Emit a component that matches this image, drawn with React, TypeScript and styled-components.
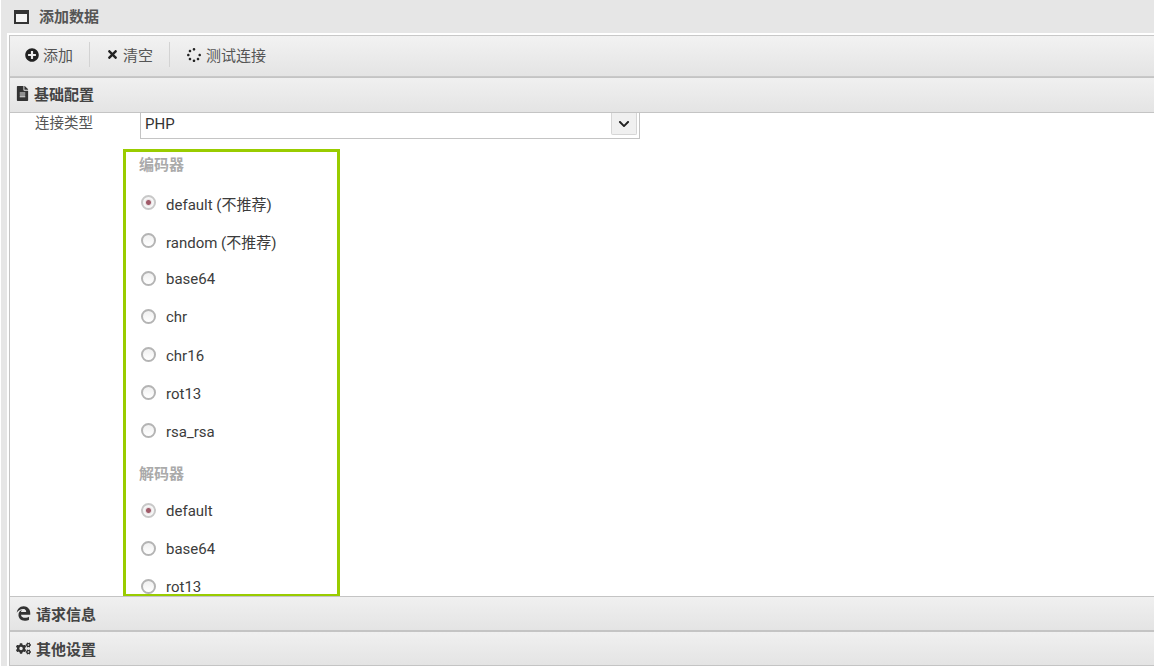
import { FaChevronDown, FaCogs, FaEdgeLegacy, FaFileAlt, FaPlusCircle, FaSpinner, FaTimes } from "react-icons/fa";
import styled, { createGlobalStyle } from "styled-components";

const encoders = [
    { label: "default (不推荐)", checked: true },
    { label: "random (不推荐)", checked: false },
    { label: "base64", checked: false },
    { label: "chr", checked: false },
    { label: "chr16", checked: false },
    { label: "rot13", checked: false },
    { label: "rsa_rsa", checked: false },
];

const decoders = [
    { label: "default", checked: true },
    { label: "base64", checked: false },
    { label: "rot13", checked: false },
];

function OptionList({ title, options }: { title: string; options: { label: string; checked: boolean }[] }) {
    return (
        <>
            <GroupTitle>{title}</GroupTitle>
            {options.map((option) => (
                <OptionRow key={option.label}>
                    <Radio $checked={option.checked} />
                    <span>{option.label}</span>
                </OptionRow>
            ))}
        </>
    );
}

export default function App() {
    return (
        <Root>
            <GlobalStyle />
            <TitleBar>
                <WindowIcon />
                <span>添加数据</span>
            </TitleBar>
            <Body>
                <Frame>
                    <Toolbar>
                        <ToolButton>
                            <FaPlusCircle size={14} />
                            <span>添加</span>
                        </ToolButton>
                        <Separator />
                        <ToolButton>
                            <FaTimes size={13} />
                            <span>清空</span>
                        </ToolButton>
                        <Separator />
                        <ToolButton>
                            <SpinnerIcon size={14} />
                            <span>测试连接</span>
                        </ToolButton>
                    </Toolbar>
                    <ConfigHeader>
                        <FileIcon size={15} />
                        <span>基础配置</span>
                    </ConfigHeader>
                    <Content>
                        <TypeRow>
                            <TypeLabel>连接类型</TypeLabel>
                            <Select>
                                <span>PHP</span>
                                <SelectButton>
                                    <FaChevronDown size={12} />
                                </SelectButton>
                            </Select>
                        </TypeRow>
                        <FormBox>
                            <OptionList title="编码器" options={encoders} />
                            <OptionList title="解码器" options={decoders} />
                        </FormBox>
                    </Content>
                    <SectionHeader>
                        <FaEdgeLegacy size={15} />
                        <span>请求信息</span>
                    </SectionHeader>
                    <SectionHeader>
                        <FaCogs size={15} />
                        <span>其他设置</span>
                    </SectionHeader>
                </Frame>
            </Body>
        </Root>
    );
}

const GlobalStyle = createGlobalStyle`
    html, body {
        margin: 0;
        height: 100%;
        overflow: hidden;
        background: #e6e6e6;
    }

    body {
        font-family: Roboto, "Noto Sans CJK SC", sans-serif;
        font-size: 15px;
        color: #404040;
    }
`;

const Root = styled.div`
    width: 1154px;
    height: 666px;
    box-sizing: border-box;
    display: flex;
    flex-direction: column;
    overflow: hidden;
    background: #e6e6e6;
    border-left: 1px solid #fff;
`;

const TitleBar = styled.div`
    height: 33px;
    flex: none;
    box-sizing: border-box;
    padding: 0 0 2px 13px;
    display: flex;
    align-items: center;
    gap: 10px;
    font-weight: 700;
    color: #555;
`;

const WindowIcon = styled.i`
    width: 15px;
    height: 14px;
    box-sizing: border-box;
    border: 2px solid #333;
    border-top-width: 4px;
    background: #f4f4f4;
    margin-top: 2px;
`;

const Body = styled.div`
    flex: 1;
    min-height: 0;
    margin-left: 6px;
    padding: 2px 0 0 2px;
    display: flex;
    background: #fff;
`;

const Frame = styled.div`
    flex: 1;
    min-width: 0;
    display: flex;
    flex-direction: column;
    border-left: 1px solid #c4c4c4;
`;

const Toolbar = styled.div`
    height: 40px;
    flex: none;
    display: flex;
    align-items: center;
    background: linear-gradient(#f2f2f2, #e4e4e4);
    border-top: 1px solid #c8c8c8;
    border-bottom: 1px solid #c8c8c8;
`;

const ToolButton = styled.div`
    display: flex;
    align-items: center;
    gap: 4px;
    padding: 0 16px 3px;
    color: #555;

    &:first-child {
        padding-left: 15px;
    }

    svg {
        color: #222;
        flex: none;
    }
`;

const SpinnerIcon = styled(FaSpinner)`
    margin: 0 1px;
`;

const Separator = styled.div`
    width: 1px;
    height: 25px;
    margin-bottom: 3px;
    background: #d3d3d3;
`;

const SectionHeader = styled.div`
    height: 35px;
    flex: none;
    box-sizing: border-box;
    display: flex;
    align-items: center;
    gap: 5px;
    padding: 0 0 1px 6px;
    background: linear-gradient(#f0f0f0, #e4e4e4);
    border-top: 1px solid #c4c4c4;
    border-bottom: 1px solid #c4c4c4;
    font-weight: 700;
    color: #444;

    svg {
        color: #333;
        flex: none;
    }
`;

const ConfigHeader = styled(SectionHeader)`
    height: 36px;
    padding-bottom: 3px;
`;

const FileIcon = styled(FaFileAlt)`
    margin: 0 -1px 0 -1px;
`;

const Content = styled.div`
    flex: 1;
    min-height: 0;
    overflow: hidden;
    display: flex;
    flex-direction: column;
    background: #fff;
`;

const TypeRow = styled.div`
    height: 26px;
    flex: none;
    display: flex;
`;

const TypeLabel = styled.div`
    width: 105px;
    padding-left: 25px;
    font-size: 14.5px;
    line-height: 22px;
    color: #555;
`;

const Select = styled.div`
    width: 500px;
    height: 26px;
    box-sizing: border-box;
    display: flex;
    justify-content: space-between;
    padding-left: 4px;
    line-height: 22px;
    color: #333;
    border-left: 1px solid #c4c4c4;
    border-right: 1px solid #c4c4c4;
    border-bottom: 1px solid #c4c4c4;
`;

const SelectButton = styled.div`
    width: 24px;
    height: 21px;
    margin-right: 2px;
    display: flex;
    align-items: center;
    justify-content: center;
    background: #f0f0f0;
    border: 1px solid #d6d6d6;
    border-top: none;
    border-radius: 0 0 2px 2px;
    color: #222;
`;

const FormBox = styled.div`
    width: 217px;
    height: 448px;
    box-sizing: border-box;
    margin: 10px 0 0 113px;
    padding-left: 13px;
    border: 3px solid #99cc00;
    overflow: hidden;
    flex: none;
`;

const GroupTitle = styled.div`
    height: 32px;
    line-height: 26px;
    font-weight: 700;
    color: #aaa;
`;

const OptionRow = styled.div`
    height: 38.15px;
    display: flex;
    align-items: center;
    gap: 10px;
    color: #3c3c3c;

    & + ${GroupTitle} {
        margin: 10px 0 -1px;
    }
`;

const Radio = styled.i<{ $checked: boolean }>`
    width: 15px;
    height: 15px;
    box-sizing: border-box;
    border-radius: 50%;
    border: 2px solid ${(props) => (props.$checked ? "#c8c8c8" : "#b4b4b4")};
    background: ${(props) =>
        props.$checked
            ? "radial-gradient(circle, #a05a68 0 2px, #e8e0e2 3px, #f6f6f6 4px)"
            : "linear-gradient(#f0f0f0, #fff)"};
    margin-left: 2px;
    margin-top: -2px;
`;
